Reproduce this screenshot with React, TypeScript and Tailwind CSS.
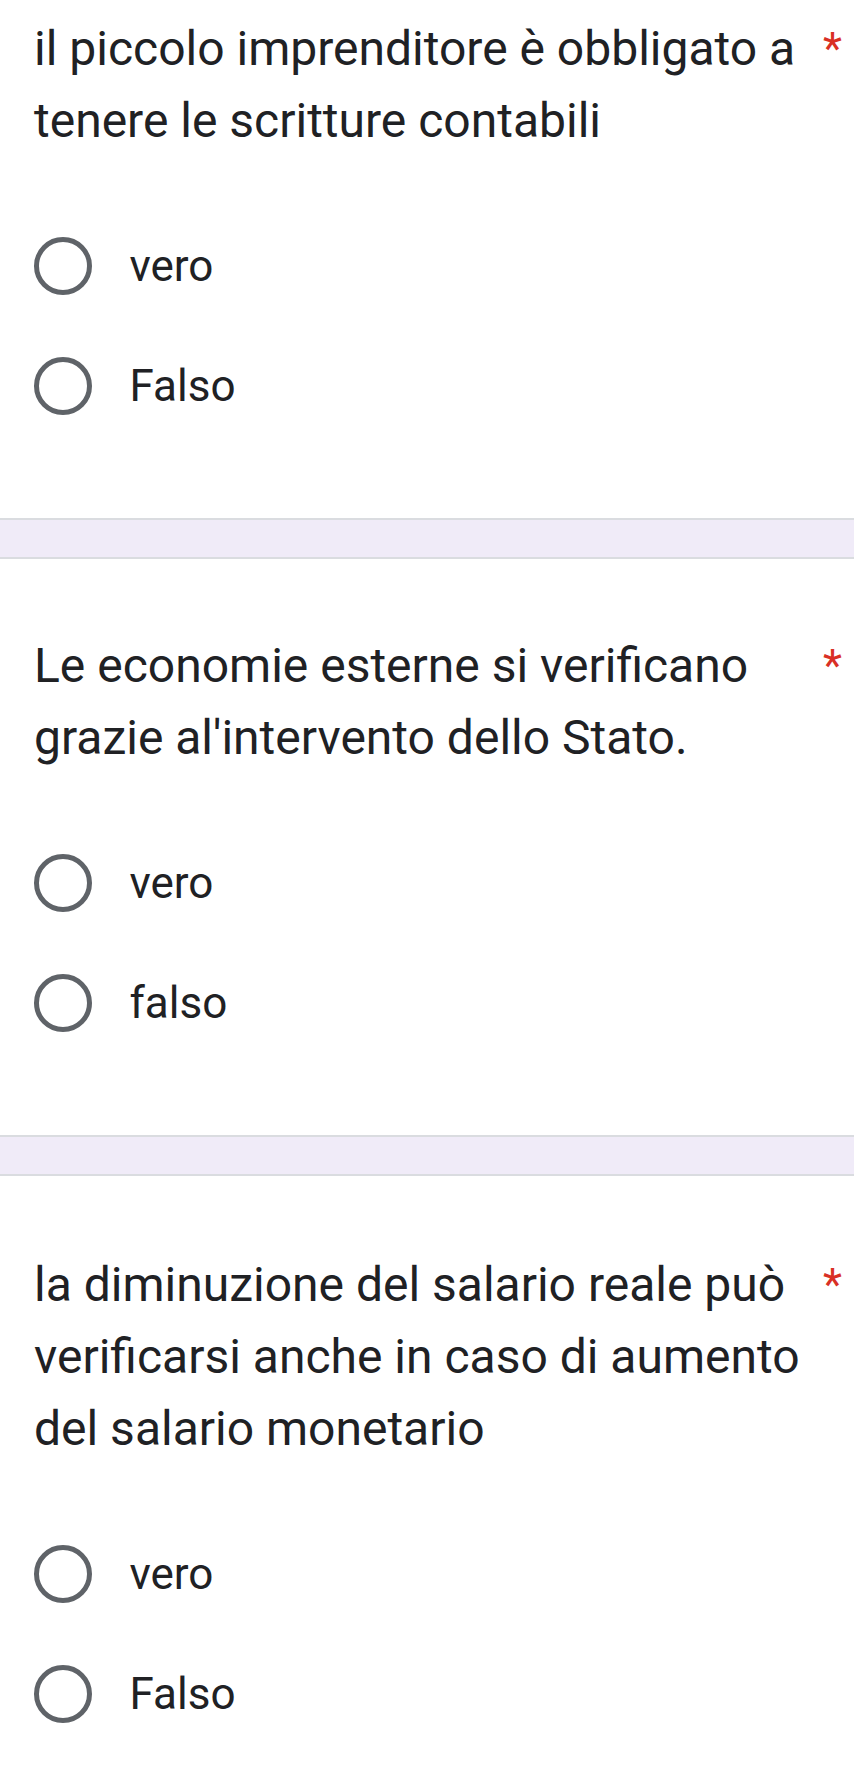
import React from "react";

type Q = { text: string; options: string[] };

const questions: Q[] = [
  {
    text: "il piccolo imprenditore è obbligato a tenere le scritture contabili",
    options: ["vero", "Falso"],
  },
  {
    text: "Le economie esterne si verificano grazie al'intervento dello Stato.",
    options: ["vero", "falso"],
  },
  {
    text: "la diminuzione del salario reale può verificarsi anche in caso di aumento del salario monetario",
    options: ["vero", "Falso"],
  },
];

function Radio() {
  return (
    <div className="w-[57.5px] h-[57.5px] shrink-0 rounded-full border-[5.5px] border-[#5f6368] bg-white" />
  );
}

const pads = ["pt-[13px]", "pt-[71px]", "pt-[73px]"];

function Question({ q, idx }: { q: Q; idx: number }) {
  return (
    <section className={`${pads[idx]} pb-[72px]`}>
      <div className="flex items-start pl-[34px]">
        <div className="w-[785px] text-[48px] leading-[72px] text-[#202124]">{q.text}</div>
        <span className="ml-[4px] text-[44px] leading-[72px] text-[#d93025]">*</span>
      </div>
      <div className="mt-[49px] flex flex-col">
        {q.options.map((o) => (
          <div key={o} className="h-[120px] flex items-center pl-[34px] gap-[38px]">
            <Radio />
            <span className="text-[44px] leading-[72px] text-[#202124]">{o}</span>
          </div>
        ))}
      </div>
    </section>
  );
}

function Divider() {
  return <div className="h-[41px] bg-[#f0ebf8] border-y-[2.75px] border-[#dadce0]" />;
}

export default function App() {
  return (
    <div
      className="w-[854px] min-h-[1791px] bg-white overflow-hidden"
      style={{ fontFamily: "Roboto, 'Noto Sans', sans-serif" }}
    >
      {questions.map((q, i) => (
        <React.Fragment key={i}>
          <Question q={q} idx={i} />
          {i < questions.length - 1 && <Divider />}
        </React.Fragment>
      ))}
    </div>
  );
}
